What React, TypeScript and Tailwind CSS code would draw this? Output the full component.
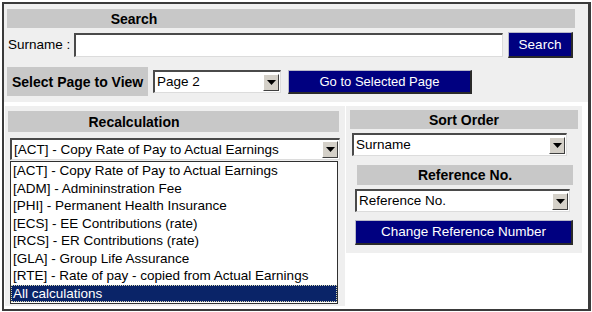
import React from "react";

function Arrow() {
  return (
    <div className="w-[16px] h-[17px] mr-[1px] bg-[#d4d0c8] border-t border-l border-t-white border-l-white border-b border-r border-b-[#404040] border-r-[#404040] flex items-center justify-center shrink-0">
      <svg width="9" height="5" viewBox="0 0 9 5">
        <polygon points="0,0 9,0 4.5,5" fill="#000" />
      </svg>
    </div>
  );
}

function Select({ text, className }: { text: string; className: string }) {
  return (
    <div
      className={`flex items-center bg-white border-t-2 border-l-2 border-t-[#4a4a4a] border-l-[#4a4a4a] border-b border-r border-b-[#dcdcdc] border-r-[#dcdcdc] ${className}`}
    >
      <span className="flex-1 pl-[2px] text-[13.5px] text-black leading-[16px] whitespace-nowrap overflow-hidden">
        {text}
      </span>
      <Arrow />
    </div>
  );
}

function NavyButton({ text, className }: { text: string; className: string }) {
  return (
    <div
      className={`flex items-center justify-center bg-[#000080] text-white leading-none border-t border-l border-t-[#b8b8c8] border-l-[#b8b8c8] border-b-2 border-r-2 border-b-[#2a2a2a] border-r-[#2a2a2a] ${className}`}
    >
      {text}
    </div>
  );
}

const items = [
  "[ACT] - Copy Rate of Pay to Actual Earnings",
  "[ADM] - Admininstration Fee",
  "[PHI] - Permanent Health Insurance",
  "[ECS] - EE Contributions (rate)",
  "[RCS] - ER Contributions (rate)",
  "[GLA] - Group Life Assurance",
  "[RTE] - Rate of pay - copied from Actual Earnings",
];

export default function App() {
  return (
    <div className="w-[592px] h-[312px] bg-white font-['Liberation_Sans',Arial,sans-serif] text-black">
      <div className="ml-[2px] mt-[2px] w-[589px] h-[309px] border-2 border-[#3a3a3a] border-r-[3px] bg-white flex flex-col">
        {/* Search section */}
        <div className="h-[98px] bg-[#efefef] pt-[5px] pl-[3px] flex flex-col">
          <div className="w-[568px] h-[19px] bg-[#c8c8c8] flex items-center">
            <div className="w-[254px] text-center font-bold text-[14px] leading-none">Search</div>
          </div>
          <div className="mt-[4px] h-[26px] flex items-center">
            <span className="ml-[1px] w-[66px] text-[13.5px] leading-none whitespace-nowrap">Surname :</span>
            <div className="w-[429px] h-[24px] bg-white border-t-2 border-l-2 border-t-[#4a4a4a] border-l-[#4a4a4a] border-b border-r border-b-[#dcdcdc] border-r-[#dcdcdc]" />
            <NavyButton text="Search" className="ml-[5px] w-[65px] h-[26px] text-[13.5px]" />
          </div>
          <div className="mt-[9px] h-[29px] flex items-center">
            <div className="w-[141px] h-[29px] bg-[#c8c8c8] flex items-center pl-[5px] font-bold text-[14px] leading-none whitespace-nowrap">
              Select Page to View
            </div>
            <Select text="Page 2" className="ml-[5px] w-[128px] h-[23px]" />
            <NavyButton text="Go to Selected Page" className="ml-[7px] w-[184px] h-[24px] text-[13px]" />
          </div>
        </div>

        {/* Lower area */}
        <div className="flex mt-[4px] ml-[1px]">
          {/* Recalculation */}
          <div className="w-[340px] h-[200px] bg-[#efefef] pt-[5px] pl-[3px] flex flex-col">
            <div className="w-[331px] h-[21px] bg-[#c8c8c8] flex items-center">
              <div className="w-[252px] text-center font-bold text-[14px] leading-none">Recalculation</div>
            </div>
            <Select
              text="[ACT] - Copy Rate of Pay to Actual Earnings"
              className="mt-[6px] ml-[2px] w-[330px] h-[22px]"
            />
            <div className="mt-[1px] ml-[2px] w-[328px] h-[143px] bg-white border border-[#303030] flex flex-col">
              {items.map((t) => (
                <div key={t} className="h-[17.5px] flex items-center pl-[2px] text-[13.5px] leading-none whitespace-nowrap">
                  {t}
                </div>
              ))}
              <div className="h-[17.5px] flex items-center pl-[1px] text-[13.5px] leading-none text-white bg-[#0a2468] border border-dotted border-[#d8d8b0]">
                All calculations
              </div>
            </div>
          </div>

          {/* Sort Order */}
          <div className="ml-[1px] w-[236px] h-[147px] bg-[#efefef] pt-[4px] pl-[4px] flex flex-col">
            <div className="w-[228px] h-[19px] bg-[#c8c8c8] flex items-center justify-center font-bold text-[14px] leading-none">
              Sort Order
            </div>
            <Select text="Surname" className="mt-[4px] ml-[2px] w-[215px] h-[23px]" />
            <div className="mt-[9px] ml-[7px] w-[216px] h-[20px] bg-[#c8c8c8] flex items-center justify-center font-bold text-[14px] leading-none">
              Reference No.
            </div>
            <Select text="Reference No." className="mt-[4px] ml-[5px] w-[215px] h-[23px]" />
            <NavyButton text="Change Reference Number" className="mt-[8px] ml-[5px] w-[218px] h-[25px] text-[13.5px]" />
          </div>
        </div>
      </div>
    </div>
  );
}
